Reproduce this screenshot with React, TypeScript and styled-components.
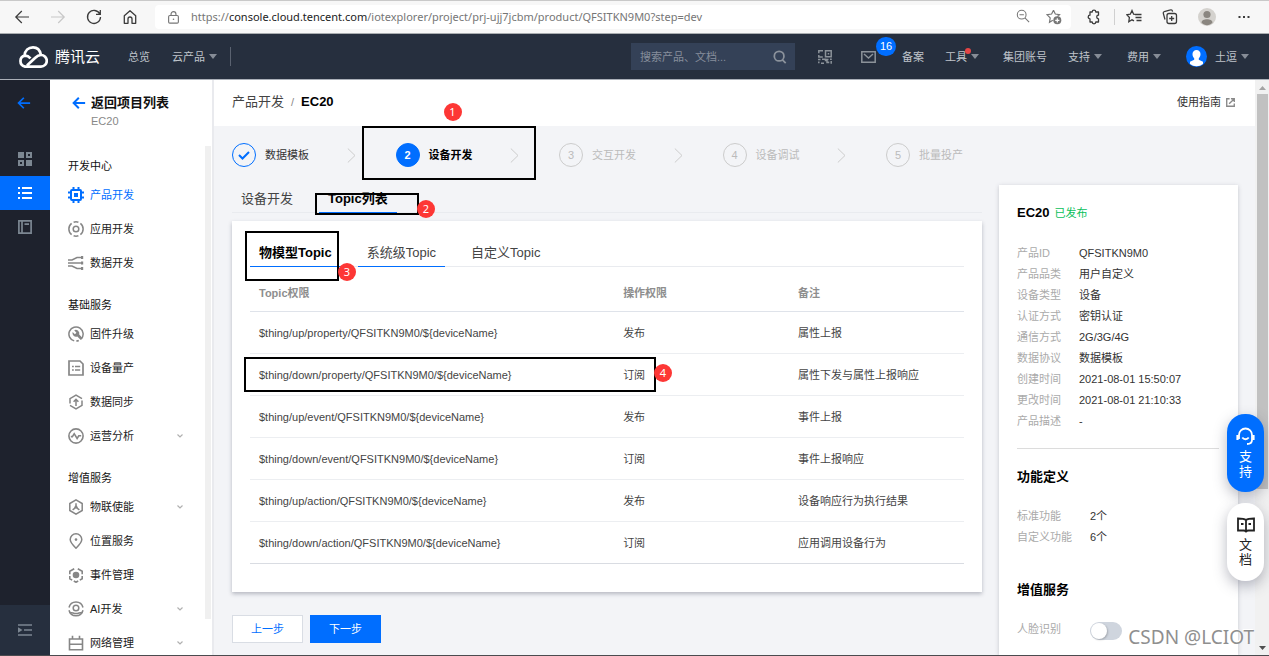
import React from "react";
import styled, { createGlobalStyle, css } from "styled-components";

const GlobalStyle = createGlobalStyle`
  * { box-sizing: border-box; }
  body {
    margin: 0;
    background: #f3f4f7;
    color: #222;
    font-family: "Liberation Sans", "Noto Sans CJK SC", sans-serif;
    font-size: 11px;
    line-height: 16px;
  }
  button, input { font: inherit; color: inherit; }
  button { border: 0; padding: 0; background: none; cursor: pointer; }
  a { color: inherit; text-decoration: none; }
  svg { display: block; flex: none; }
  ul, dl, dd, h1, h2, p { margin: 0; padding: 0; }
  ul { list-style: none; }
`;

/* ---------- icons ---------- */

type IconProps = { size?: number; w?: number; h?: number; box?: string; sw?: number; children: React.ReactNode };
const Icon = ({ size = 16, w, h, box = "0 0 16 16", sw = 1.4, children }: IconProps) => (
  <svg width={w ?? size} height={h ?? size} viewBox={box} fill="none" stroke="currentColor" strokeWidth={sw} aria-hidden="true">
    {children}
  </svg>
);

const ArrowLeft = ({ sw = 1.2, size = 16 }: { sw?: number; size?: number }) => (
  <Icon sw={sw} size={size}><path d="M15 8H1.8M7.8 2 1.8 8l6 6" /></Icon>
);

const icons: Record<string, React.ReactNode> = {
  product: (
    <Icon sw={2}>
      <rect x="3" y="3" width="10" height="10" rx="1" />
      <path d="M5.500 0v3M10.500 0v3M5.500 13v3M10.500 13v3M0 5.500h3M0 10.500h3M13 5.500h3M13 10.500h3" />
      <rect x="6" y="6" width="4" height="4" fill="currentColor" stroke="none" />
    </Icon>
  ),
  app: (
    <Icon sw={1.5}>
      <circle cx="8" cy="8" r="2.8" />
      <path d="M3.6 2.4a7.1 7.1 0 0 0 0 11.2M12.4 2.4a7.1 7.1 0 0 1 0 11.2M5.600 1.300a7 7 0 0 1 4.800 0M5.600 14.700a7 7 0 0 0 4.800 0" />
    </Icon>
  ),
  data: (
    <Icon sw={1.5}>
      <path d="M0 5h4l5-2.5h5M0 8h14M0 11h4l5 2.5h5" />
      <path d="M13 .9h2.2v3H13zM13 6.6h2.2v3H13zM13 12h2.2v3H13z" fill="currentColor" stroke="none" />
    </Icon>
  ),
  firmware: (
    <Icon sw={1.5}>
      <path d="M6.2 14.9a7.1 7.1 0 1 1 7-2M8.3 15.1a7 7 0 0 0 2.5-.6" />
      <path d="M6.2 4.2a3.6 3.6 0 0 1 5 4.3l3.4 3.6-1.8 1.8-3.5-3.5A3.6 3.6 0 0 1 4.6 6l2.3 2.2 1.5-1.5z" fill="currentColor" stroke="none" />
    </Icon>
  ),
  batch: (
    <Icon sw={1.7}>
      <path d="M1 1h11l3 3v11H1z" />
      <path d="M4 6.500h1.800M7 6.500h5.200M4 10h1.800M7 10h5.200" />
    </Icon>
  ),
  sync: (
    <Icon sw={1.5}>
      <path d="M2 9.500V4.6L8 1.2l6 3.4M14 6.500v4.900l-6 3.400-6-3.400" />
      <path d="M8 12V6M5.6 7.8 8 5.4l2.4 2.4" />
    </Icon>
  ),
  analysis: (
    <Icon sw={1.6}>
      <circle cx="8" cy="8" r="7.1" />
      <path d="M2.800 8.600h1.600l1.800-2.900 2.900 4.800 1.700-2.700h2.400" />
    </Icon>
  ),
  enable: (
    <Icon sw={1.5}>
      <path d="M8 .9l6.200 3.600v7L8 15.100l-6.200-3.600v-7z" />
      <path d="M8 4.200v4.200l-3.400 2.400M8 8.400l3.400 2.400M6.400 9.600 8 6.600l1.600 3" />
    </Icon>
  ),
  location: (
    <Icon sw={1.5}>
      <path d="M8 15.2C4 11.4 2.2 9.2 2.2 6.6a5.8 5.8 0 0 1 11.6 0c0 2.6-1.8 4.8-5.8 8.6z" />
      <circle cx="8" cy="6.6" r="1.3" fill="currentColor" stroke="none" />
    </Icon>
  ),
  event: (
    <Icon sw={1.600}>
      <path d="M6.200 1.800 1.800 4.300v2.900M9.800 1.800l4.400 2.500v2.900M1.800 9v2.700l2.400 1.400M14.200 9v2.700l-2.400 1.400M5.800 14 8 15.200l2.200-1.200" />
      <circle cx="8" cy="8" r="3.300" fill="currentColor" stroke="none" />
    </Icon>
  ),
  ai: (
    <Icon sw={1.5}>
      <path d="M1 6.500a7.200 7.200 0 0 1 14 0M1 9.200a7.200 7.200 0 0 0 14 0" />
      <circle cx="8" cy="7" r="2.800" />
      <path d="M1.500 11.400c3.500 0 3.500 1.200 6.500 1.200s3-1.200 6.500-1.200" />
    </Icon>
  ),
  network: (
    <Icon sw={1.600}>
      <path d="M1.500 14.800V4h13v10.800zM1.500 9.200h13M4.500 4V.8M11.500 4V.8" />
    </Icon>
  ),
};

/* ---------- browser bar ---------- */

const Shell = styled.div`
  display: flex;
  flex-direction: column;
  height: 100vh;
  overflow: hidden;
  border-bottom: 1px solid #4b4b4f;
`;
const BrowserBar = styled.div`
  flex: none;
  display: flex;
  align-items: center;
  height: 34px;
  padding: 0 17px 0 14px;
  background: #f7f7f7;
  border-top: 1px solid #c9c9c9;
  border-bottom: 1px solid #a9adb0;
  color: #3b3b3b;
`;
const NavButtons = styled.div`
  display: flex;
  gap: 20px;
  margin-right: 17px;
`;
const IconButton = styled.button<{ $faded?: boolean }>`
  display: flex;
  color: ${(p) => (p.$faded ? "#c8c8c8" : "inherit")};
`;
const AddressBox = styled.div`
  flex: 1;
  display: flex;
  align-items: center;
  height: 24px;
  padding: 0 9px 0 12px;
  border-radius: 4px;
  background: #fff;
  color: #777;
`;
const Address = styled.div`
  flex: 1;
  margin-left: 11px;
  font-family: "Noto Sans", sans-serif;
  color: #767676;
  white-space: nowrap;
  b { font-weight: 400; color: #222; }
`;
const AddressTools = styled.div`
  display: flex;
  gap: 16px;
`;
const BrowserTools = styled.div`
  display: flex;
  align-items: center;
  gap: 20px;
  margin-left: 15px;
`;
const ExtensionTool = styled.div`
  display: flex;
  align-items: center;
  padding-right: 12px;
  margin-right: -9px;
  border-right: 1px solid #d0d0d0;
`;

function Browser() {
  return (
    <BrowserBar>
      <NavButtons>
        <IconButton aria-label="后退"><ArrowLeft /></IconButton>
        <IconButton aria-label="前进" $faded><Icon sw={1.2}><path d="M1 8h13.200M8.200 2l6 6-6 6" /></Icon></IconButton>
        <IconButton aria-label="刷新"><Icon sw={1.3}><path d="M13.800 5A6.500 6.500 0 1 0 14.500 8M14.300 1v4.300H10" /></Icon></IconButton>
        <IconButton aria-label="主页"><Icon sw={1.3}><path d="M2.300 6.800 8 1.700l5.700 5.100v7.500H10V10a2 2 0 0 0-4 0v4.300H2.300z" strokeLinejoin="round" /></Icon></IconButton>
      </NavButtons>
      <AddressBox>
        <Icon size={13} sw={1.4}><rect x="2" y="5.500" width="12" height="9.500" rx="1.500" /><path d="M5 5.500V3.800a3 3 0 0 1 6 0v1.700" /><circle cx="8" cy="10.200" r="1" fill="currentColor" stroke="none" /></Icon>
        <Address>https://<b>console.cloud.tencent.com</b>/iotexplorer/project/prj-ujj7jcbm/product/QFSITKN9M0?step=dev</Address>
        <AddressTools>
          <IconButton aria-label="缩放"><Icon size={14} sw={1.2}><circle cx="6.500" cy="6.500" r="5" /><path d="m10.200 10.200 4.800 4.800M4 6.500h5" /></Icon></IconButton>
          <IconButton aria-label="收藏"><Icon sw={1.2}><path d="M7.500 1.200 9.300 5l4.200.6-2 1.900M6.800 11.300l-3.300 2 .7-4.400L1 5.700 5.600 5l1.900-3.800" /><circle cx="11.300" cy="11.300" r="4" fill="currentColor" stroke="none" /><path d="M11.300 9.200v4.200M9.200 11.300h4.200" stroke="#fff" /></Icon></IconButton>
        </AddressTools>
      </AddressBox>
      <BrowserTools>
        <ExtensionTool>
          <IconButton aria-label="扩展"><Icon sw={1.3}><path d="M4 3h2.200a1.800 1.800 0 0 1 3.600 0H12.500v3.200a1.800 1.800 0 0 0 0 3.600V13H9.800a1.800 1.800 0 0 1-3.600 0H4V9.800a1.800 1.800 0 0 1 0-3.600z" strokeLinejoin="round" /></Icon></IconButton>
        </ExtensionTool>
        <IconButton aria-label="收藏夹"><Icon sw={1.3}><path d="M9.600 5.400 7.600 5.200 6 1.500 4.300 5.200.8 5.700l2.600 2.800-.6 4.200L6 10.800l2 1M9 5.500h6.500M9.500 8.500h6M10.500 11.500h5" /></Icon></IconButton>
        <IconButton aria-label="集锦"><Icon sw={1.3}><rect x="5" y="4.500" width="9.500" height="10" rx="2" /><path d="M9.700 7v5M7.200 9.500h5M3 10.500 1.300 4.300a1.500 1.500 0 0 1 1-1.800L8.500.9a1.500 1.500 0 0 1 1.900 1.100l.2.600" /></Icon></IconButton>
        <IconButton aria-label="个人资料"><Icon size={18} box="0 0 18 18"><circle cx="9" cy="9" r="9" fill="#d4d2ce" stroke="none" /><circle cx="9" cy="6.500" r="3.600" fill="#8a8680" stroke="none" /><path d="M3.500 14.500c0-4.500 11-4.500 11 0-3 3.500-8 3.500-11 0z" fill="#8a8680" stroke="none" /></Icon></IconButton>
        <IconButton aria-label="更多"><Icon><path d="M2.500 8h2M7 8h2M11.500 8h2" strokeWidth="2" /></Icon></IconButton>
      </BrowserTools>
    </BrowserBar>
  );
}

/* ---------- console header ---------- */

const Header = styled.header`
  flex: none;
  display: flex;
  align-items: center;
  height: 46px;
  padding: 0 20px 0 18px;
  background: #262f3e;
  border-bottom: 1px solid #aab0b8;
  color: #bfc4cb;
`;
const Brand = styled.a`
  display: flex;
  align-items: center;
  gap: 7px;
  margin-right: 28px;
  font-size: 15px;
  color: #fff;
`;
const HeaderLink = styled.a<{ $gap: number; $muted?: boolean }>`
  position: relative;
  display: flex;
  align-items: center;
  gap: 4px;
  margin-right: ${(p) => p.$gap}px;
  color: ${(p) => (p.$muted ? "#8b9299" : "inherit")};
  white-space: nowrap;
`;
const Caret = styled.i`
  border: 4px solid transparent;
  border-top: 5px solid #868c96;
  border-bottom: 0;
`;
const HeaderDivider = styled.span`
  height: 19px;
  border-left: 1px solid #5a6270;
`;
const SearchBox = styled.form`
  display: flex;
  align-items: center;
  width: 164px;
  height: 27px;
  margin: 0 23px 0 auto;
  padding: 0 8px 0 9px;
  background: #344157;
  color: #8b929c;
`;
const SearchInput = styled.input`
  flex: 1;
  min-width: 0;
  border: 0;
  padding: 0;
  background: none;
  outline: 0;
  &::placeholder { color: #868e9b; opacity: 1; }
`;
const Count = styled.span`
  position: absolute;
  left: 15px;
  top: -14px;
  min-width: 20px;
  border-radius: 10px;
  background: #006eff;
  color: #fff;
  line-height: 19px;
  text-align: center;
`;
const RedDot = styled.span`
  position: absolute;
  left: 20px;
  top: -1px;
  width: 6px;
  height: 6px;
  border-radius: 3px;
  background: #e54545;
`;
const Avatar = styled.span`
  display: flex;
  margin-right: 4px;
`;

function ConsoleHeader() {
  return (
    <Header>
      <Brand href="#">
        <Icon w={30} h={22} box="0 0 30 22" sw={2.7}>
          <path d="M7 9.600a5.600 5.600 0 0 0 0 11H23a5.800 5.800 0 0 0 0-11.600c-3 0-4.500 1.500-6 3L9 19.600M6.500 9.700C7 4.400 10.500 1.400 15 1.400c4.300 0 7 3 7.800 7.200M7 9.600c2.500 0 4 1 5.500 2.700" />
        </Icon>
        腾讯云
      </Brand>
      <HeaderLink href="#" $gap={22}>总览</HeaderLink>
      <HeaderLink href="#" $gap={13}>云产品<Caret /></HeaderLink>
      <HeaderDivider />
      <SearchBox>
        <SearchInput aria-label="搜索" placeholder="搜索产品、文档..." />
        <IconButton type="button" aria-label="搜索"><Icon size={14} sw={2}><circle cx="7" cy="7" r="5.500" /><path d="m10.500 11 4 4" /></Icon></IconButton>
      </SearchBox>
      <HeaderLink href="#" $gap={29} $muted aria-label="小程序">
        <Icon size={14} box="0 0 14 14" sw={1.5}>
          <path d="M5 .8H.8v2.400M.8 5v2h4M7.500.8h5.700v6H7.500zM9.700 3.800h1.500M0 9.500h2.500M4 9.200h3.500v2M.8 13.200V11.500M3 13.200h3M9 13.200V9.500h1.500M12 9.200h1.800M13.200 11v2.800M10.500 11.500v1.700" />
        </Icon>
      </HeaderLink>
      <HeaderLink href="#" $gap={26} $muted aria-label="消息">
        <Icon w={15} h={12} box="0 0 15 12" sw={1.5}><path d="M.8.8h13.400v10.400H.8zM3 3l4.500 4L12 3" /></Icon>
        <Count>16</Count>
      </HeaderLink>
      <HeaderLink href="#" $gap={21}>备案</HeaderLink>
      <HeaderLink href="#" $gap={24}>工具<Caret /><RedDot /></HeaderLink>
      <HeaderLink href="#" $gap={21}>集团账号</HeaderLink>
      <HeaderLink href="#" $gap={25}>支持<Caret /></HeaderLink>
      <HeaderLink href="#" $gap={25}>费用<Caret /></HeaderLink>
      <HeaderLink href="#" $gap={0}>
        <Avatar>
          <Icon w={21} h={21} box="0 0 21 21"><circle cx="10.500" cy="10.500" r="10.500" fill="#006eff" stroke="none" /><path d="M10.500 4a4 4 0 0 1 4 4.200c0 1.800-.8 3-1.700 4v1.500l4.200 2V18a10.500 10.500 0 0 1-13 0v-2.300l4.200-2v-1.500c-.9-1-1.700-2.200-1.700-4a4 4 0 0 1 4-4.200z" fill="#fff" stroke="none" /></Icon>
        </Avatar>
        土逗<Caret />
      </HeaderLink>
    </Header>
  );
}

/* ---------- left rail and side menu ---------- */

const Body = styled.div`
  flex: 1;
  min-height: 0;
  display: flex;
`;
const Rail = styled.nav`
  flex: none;
  display: flex;
  flex-direction: column;
  width: 50px;
  background: #1e222d;
  color: #7c8792;
`;
const RailButton = styled.button<{ $active?: boolean; $back?: boolean; $foot?: boolean }>`
  display: flex;
  align-items: center;
  justify-content: center;
  flex: none;
  height: 34px;
  ${(p) => p.$active && css`background: #006eff; color: #fff;`}
  ${(p) => p.$back && css`height: 46px; margin-bottom: 16px; color: #006eff; padding-right: 3px;`}
  ${(p) => p.$foot && css`height: 50px; margin-top: auto; background: #262f3e;`}
`;
const SideNav = styled.nav`
  flex: none;
  display: flex;
  flex-direction: column;
  width: 164px;
  background: #fff;
  border-right: 2px solid #e9eaee;
`;
const BackLink = styled.a`
  flex: none;
  display: grid;
  grid-template-columns: 19px 1fr;
  align-items: center;
  height: 65px;
  padding: 14px 0 15px 22px;
  svg { color: #006eff; }
  strong { font-size: 13px; line-height: 18px; color: #111; }
  span { grid-column: 2; line-height: 18px; color: #888; }
`;
const MenuScroller = styled.div`
  flex: 1;
  min-height: 0;
  display: flex;
`;
const Menu = styled.div`
  flex: 1;
  height: 100%;
  overflow: hidden;
  padding: 9px 0 0 18px;
`;
const MenuTrack = styled.div`
  flex: none;
  width: 6px;
  margin: 1px 1px 36px 0;
  background: #f0f0f0;
`;
const MenuTitle = styled.h2`
  font-size: 11px;
  font-weight: 400;
  line-height: 24px;
  color: #111;
`;
const MenuList = styled.ul`
  margin-bottom: 13px;
`;
const MenuItem = styled.a<{ $active?: boolean }>`
  display: flex;
  align-items: center;
  gap: 6px;
  height: 34px;
  padding-right: 22px;
  color: ${(p) => (p.$active ? "#006eff" : "#222")};
  > svg:first-child { color: ${(p) => (p.$active ? "#006eff" : "#868686")}; }
  > svg:last-child { margin-left: auto; color: #b0b0b0; }
`;

const menu: { title: string; items: [string, string, boolean?][] }[] = [
  { title: "开发中心", items: [["product", "产品开发"], ["app", "应用开发"], ["data", "数据开发"]] },
  { title: "基础服务", items: [["firmware", "固件升级"], ["batch", "设备量产"], ["sync", "数据同步"], ["analysis", "运营分析", true]] },
  { title: "增值服务", items: [["enable", "物联使能", true], ["location", "位置服务"], ["event", "事件管理"], ["ai", "AI开发", true], ["network", "网络管理", true]] },
];

function Sidebar() {
  return (
    <>
      <Rail>
        <RailButton $back aria-label="返回"><ArrowLeft sw={2} size={14} /></RailButton>
        <RailButton aria-label="概览">
          <Icon size={14} box="0 0 14 14" sw={2}><path d="M0 0h6v6H0zM8 8h6v6H8z" fill="currentColor" stroke="none" /><path d="M9 1h4v4H9zM1 9h4v4H1z" /></Icon>
        </RailButton>
        <RailButton $active aria-label="列表">
          <Icon size={14} box="0 0 14 14" sw={2}><path d="M0 2h2M4 2h10M0 7h2M4 7h10M0 12h2M4 12h10" /></Icon>
        </RailButton>
        <RailButton aria-label="文档">
          <Icon size={14} box="0 0 14 14" sw={1.7}><path d="M.9.900h12.200v12.200H.9zM4 1v12M6.500 4.200h4.500" /></Icon>
        </RailButton>
        <RailButton $foot aria-label="展开">
          <Icon w={14} h={12} box="0 0 14 12" sw={1.7}><path d="M0 1h14M6 6h8M0 11h14" /><path d="M0 3.200 4.500 6 0 8.800z" fill="currentColor" stroke="none" /></Icon>
        </RailButton>
      </Rail>
      <SideNav>
        <BackLink href="#">
          <ArrowLeft sw={2.2} size={14} />
          <strong>返回项目列表</strong>
          <span>EC20</span>
        </BackLink>
        <MenuScroller>
          <Menu>
            {menu.map((group) => (
              <React.Fragment key={group.title}>
                <MenuTitle>{group.title}</MenuTitle>
                <MenuList>
                  {group.items.map(([icon, label, more]) => (
                    <li key={label}>
                      <MenuItem href="#" $active={icon === "product"}>
                        {icons[icon]}
                        <span>{label}</span>
                        {more && <Icon w={6} h={4} box="0 0 6 4" sw={1.2}><path d="m.5.500 2.500 2.500L5.500.500" /></Icon>}
                      </MenuItem>
                    </li>
                  ))}
                </MenuList>
              </React.Fragment>
            ))}
          </Menu>
          <MenuTrack />
        </MenuScroller>
      </SideNav>
    </>
  );
}

/* ---------- annotations drawn over the page ---------- */

const Frame = styled.span<{ $x: number; $y: number; $w: number; $h: number }>`
  position: absolute;
  z-index: 2;
  left: ${(p) => p.$x}px;
  top: ${(p) => p.$y}px;
  width: ${(p) => p.$w}px;
  height: ${(p) => p.$h}px;
  border: 2px solid #000;
  pointer-events: none;
`;
const Marker = styled.span<{ $x: number; $y: number }>`
  position: absolute;
  z-index: 3;
  left: ${(p) => p.$x}px;
  top: ${(p) => p.$y}px;
  width: 18px;
  height: 18px;
  border-radius: 9px;
  background: #fd3735;
  color: #fff;
  font-family: "Noto Sans", sans-serif;
  font-size: 11px;
  font-weight: 400;
  line-height: 17px;
  text-align: center;
`;

/* ---------- main area ---------- */

const Main = styled.main`
  position: relative;
  flex: 1;
  min-width: 0;
  display: flex;
  overflow: hidden;
`;
const Page = styled.div`
  flex: 1;
  min-width: 0;
  display: flex;
  flex-direction: column;
`;
const TitleBar = styled.div`
  flex: none;
  display: flex;
  align-items: center;
  justify-content: space-between;
  height: 46px;
  padding: 0 20px 2px 18px;
  background: #fff;
`;
const Crumbs = styled.div`
  display: flex;
  gap: 7px;
  font-size: 13px;
  color: #444;
  h1 { font-size: 13px; color: #000; line-height: 16px; }
  span { font-size: 11px; color: #888; }
`;
const GuideLink = styled.a`
  display: flex;
  align-items: center;
  gap: 5px;
  color: #333;
  svg { color: #888; }
`;
const Columns = styled.div`
  flex: 1;
  min-height: 0;
  display: grid;
  grid-template-columns: minmax(0, 1fr) 239px;
  gap: 17px;
  padding: 0 17px 0 18px;
`;
const StepList = styled.ol`
  display: flex;
  height: 58px;
  margin: 0;
  padding: 17px 0 0;
  list-style: none;
`;
const StepItem = styled.li<{ $state: "done" | "current" | "todo" }>`
  position: relative;
  flex: 1;
  display: flex;
  align-items: center;
  gap: 9px;
  height: 24px;
  padding-right: 40px;
  white-space: nowrap;
  color: ${(p) => (p.$state === "todo" ? "#bbb" : p.$state === "done" ? "#333" : "#000")};
  font-weight: ${(p) => (p.$state === "current" ? 700 : 400)};
  > svg { margin-left: auto; color: #ccc; }
  &:last-child { flex: none; padding-right: 19px; }
`;
const StepMark = styled.span<{ $state: "done" | "current" | "todo" }>`
  flex: none;
  display: flex;
  align-items: center;
  justify-content: center;
  width: 24px;
  height: 24px;
  border-radius: 12px;
  border: 1px solid ${(p) => (p.$state === "todo" ? "#ccc" : "#006eff")};
  background: ${(p) => (p.$state === "current" ? "#006eff" : "transparent")};
  color: ${(p) => (p.$state === "current" ? "#fff" : p.$state === "done" ? "#006eff" : "#bbb")};
`;
const TabList = styled.div<{ $offset: number }>`
  display: flex;
  gap: 17px;
  padding-top: ${(p) => p.$offset}px;
  border-bottom: 1px solid #e9ebef;
`;
const Tab = styled.button<{ $selected?: boolean; $underlined?: boolean }>`
  position: relative;
  margin-bottom: -1px;
  padding: 0 9px;
  border-bottom: 1px solid ${(p) => (p.$underlined ? "#006eff" : "transparent")};
  font-size: 13px;
  line-height: 26px;
  color: ${(p) => (p.$selected ? "#000" : "#444")};
  font-weight: ${(p) => (p.$selected ? 700 : 400)};
  white-space: nowrap;
`;
const Card = styled.section`
  margin-top: 8px;
  padding: 0 18px 28px;
  background: #fff;
  box-shadow: 0 2px 4px rgba(54, 58, 80, 0.32);
`;
const TableWrap = styled.div`
  position: relative;
`;
const Table = styled.table`
  width: 100%;
  table-layout: fixed;
  border-collapse: separate;
  border-spacing: 0;
  color: #444;
  th, td {
    height: 42px;
    padding: 0 9px;
    border-bottom: 1px solid #eceef1;
    text-align: left;
    vertical-align: middle;
  }
  th { height: 45px; padding-top: 8px; border-color: #dfe3ea; color: #8e8e8e; }
  th:first-child { width: 51%; }
  th:nth-child(3) { width: 24.5%; }
  tbody tr:last-child td { border-color: #d9dce2; }
`;
const Actions = styled.div`
  display: flex;
  gap: 7px;
  margin-top: 23px;
`;
const ActionButton = styled.button<{ $primary?: boolean }>`
  width: 71px;
  height: 28px;
  border: 1px solid ${(p) => (p.$primary ? "#006eff" : "#d9dde4")};
  background: ${(p) => (p.$primary ? "#006eff" : "#fff")};
  color: ${(p) => (p.$primary ? "#fff" : "#006eff")};
`;

const rows = [
  ["$thing/up/property/QFSITKN9M0/${deviceName}", "发布", "属性上报"],
  ["$thing/down/property/QFSITKN9M0/${deviceName}", "订阅", "属性下发与属性上报响应"],
  ["$thing/up/event/QFSITKN9M0/${deviceName}", "发布", "事件上报"],
  ["$thing/down/event/QFSITKN9M0/${deviceName}", "订阅", "事件上报响应"],
  ["$thing/up/action/QFSITKN9M0/${deviceName}", "发布", "设备响应行为执行结果"],
  ["$thing/down/action/QFSITKN9M0/${deviceName}", "订阅", "应用调用设备行为"],
];
const steps = ["数据模板", "设备开发", "交互开发", "设备调试", "批量投产"];

function Steps() {
  return (
    <StepList>
      {steps.map((label, i) => {
        const state = i === 0 ? "done" : i === 1 ? "current" : "todo";
        return (
          <StepItem key={label} $state={state}>
            <StepMark $state={state}>
              {i === 0 ? <Icon w={12} h={9} box="0 0 12 9" sw={2}><path d="M1 4l3.500 3.500L11 1" /></Icon> : i + 1}
            </StepMark>
            {label}
            {i < 4 && <Icon w={9} h={15} box="0 0 9 15" sw={1}><path d="m.8.500 7.200 7-7.200 7" /></Icon>}
            {i === 1 && (
              <>
                <Frame $x={-34} $y={-17} $w={174} $h={54} />
                <Marker $x={48} $y={-40}>1</Marker>
              </>
            )}
          </StepItem>
        );
      })}
    </StepList>
  );
}

/* ---------- product details ---------- */

const Details = styled.aside`
  margin-top: 59px;
  padding: 18px 19px 0 18px;
  background: #fff;
  box-shadow: 0 1px 4px rgba(54, 58, 80, 0.25);
`;
const ProductTitle = styled.h2`
  display: flex;
  align-items: center;
  gap: 5px;
  margin-bottom: 20px;
  font-size: 13px;
  line-height: 20px;
  color: #000;
  span { font-size: 11px; font-weight: 400; color: #0abf5b; }
`;
const FieldList = styled.dl<{ $label: number }>`
  display: grid;
  grid-template-columns: ${(p) => p.$label}px 1fr;
  line-height: 21px;
  dt { color: #aaa; }
  dd { color: #333; }
`;
const Rule = styled.hr`
  height: 1px;
  margin: 16px 0 0;
  border: 0;
  background: #dcdcdc;
`;
const SectionTitle = styled.h2<{ $space: number }>`
  margin: ${(p) => p.$space}px 0 19px;
  font-size: 13px;
  line-height: 20px;
  color: #000;
`;
const ToggleRow = styled.label`
  display: grid;
  grid-template-columns: 73px 1fr;
  align-items: center;
  line-height: 21px;
  color: #aaa;
`;
const Toggle = styled.input`
  appearance: none;
  width: 32px;
  height: 18px;
  margin: 2px 0 0;
  border-radius: 9px;
  background: #cfd5de;
  &::before {
    content: "";
    display: block;
    width: 16px;
    height: 16px;
    margin: 1px;
    border-radius: 8px;
    background: #fff;
    box-shadow: 1px 1px 2px rgba(0, 0, 0, 0.2);
  }
`;

const fields = [
  ["产品ID", "QFSITKN9M0"],
  ["产品品类", "用户自定义"],
  ["设备类型", "设备"],
  ["认证方式", "密钥认证"],
  ["通信方式", "2G/3G/4G"],
  ["数据协议", "数据模板"],
  ["创建时间", "2021-08-01 15:50:07"],
  ["更改时间", "2021-08-01 21:10:33"],
  ["产品描述", "-"],
];

function Fields({ label, items }: { label: number; items: string[][] }) {
  return (
    <FieldList $label={label}>
      {items.map(([k, v]) => (
        <React.Fragment key={k}>
          <dt>{k}</dt>
          <dd>{v}</dd>
        </React.Fragment>
      ))}
    </FieldList>
  );
}

/* ---------- scroll bar and floating parts ---------- */

const ScrollTrack = styled.div`
  flex: none;
  display: flex;
  flex-direction: column;
  align-items: center;
  justify-content: space-between;
  width: 14px;
  padding: 6px 0 5px;
  background: #f1f1f1;
  color: #a3a3a3;
`;
const ScrollThumb = styled.div`
  width: 11px;
  height: 70%;
  margin: 4px 0 auto;
  background: #c1c1c1;
`;
const Floating = styled.div`
  position: absolute;
  z-index: 4;
  right: 5px;
  bottom: 74px;
  display: flex;
  flex-direction: column;
  gap: 11px;
`;
const FloatButton = styled.button<{ $primary?: boolean }>`
  display: flex;
  flex-direction: column;
  align-items: center;
  width: 37px;
  height: 78px;
  padding: 13px 11px 0;
  border-radius: 18px;
  background: ${(p) => (p.$primary ? "#006eff" : "#fff")};
  color: ${(p) => (p.$primary ? "#fff" : "#222")};
  font-size: 13px;
  line-height: 15px;
  box-shadow: 0 5px 14px rgba(54, 58, 80, 0.35);
  svg { margin-bottom: 3px; }
`;
const Watermark = styled.p`
  position: absolute;
  z-index: 5;
  right: 15px;
  bottom: 5px;
  font-family: "Noto Sans", sans-serif;
  font-size: 19px;
  line-height: 26px;
  color: #8f8f8f;
  text-shadow: -1px -1px 0 #fff;
`;

export default function App() {
  return (
    <>
      <GlobalStyle />
      <Shell>
        <Browser />
        <ConsoleHeader />
        <Body>
          <Sidebar />
          <Main>
            <Page>
              <TitleBar>
                <Crumbs>
                  <a href="#">产品开发</a>
                  <span>/</span>
                  <h1>EC20</h1>
                </Crumbs>
                <GuideLink href="#">
                  使用指南
                  <Icon size={9} box="0 0 10 10" sw={1.5}><path d="M4 .8H.8v8.400h8.400V6M5.500.8h3.700v3.700M9 1 3.500 6.500" /></Icon>
                </GuideLink>
              </TitleBar>
              <Columns>
                <div>
                  <Steps />
                  <TabList $offset={2} role="tablist">
                    <Tab role="tab">设备开发</Tab>
                    <Tab role="tab" aria-selected $selected $underlined>
                      Topic列表
                      <Frame $x={-4} $y={7} $w={104} $h={22} />
                      <Marker $x={98} $y={14}>2</Marker>
                    </Tab>
                  </TabList>
                  <Card>
                    <TabList $offset={19} role="tablist">
                      <Tab role="tab" aria-selected $selected $underlined>
                        物模型Topic
                        <Frame $x={-5} $y={-9} $w={94} $h={50} />
                        <Marker $x={88} $y={23}>3</Marker>
                      </Tab>
                      <Tab role="tab" $underlined>系统级Topic</Tab>
                      <Tab role="tab">自定义Topic</Tab>
                    </TabList>
                    <TableWrap>
                      <Table>
                        <thead>
                          <tr>
                            <th>Topic权限</th>
                            <th>操作权限</th>
                            <th>备注</th>
                          </tr>
                        </thead>
                        <tbody>
                          {rows.map((row) => (
                            <tr key={row[0]}>
                              {row.map((cell) => <td key={cell}>{cell}</td>)}
                            </tr>
                          ))}
                        </tbody>
                      </Table>
                      <Frame $x={-6} $y={90} $w={412} $h={35} />
                      <Marker $x={404} $y={97}>4</Marker>
                    </TableWrap>
                  </Card>
                  <Actions>
                    <ActionButton>上一步</ActionButton>
                    <ActionButton $primary>下一步</ActionButton>
                  </Actions>
                </div>
                <Details>
                  <ProductTitle>EC20 <span>已发布</span></ProductTitle>
                  <Fields label={62} items={fields} />
                  <Rule />
                  <SectionTitle $space={18}>功能定义</SectionTitle>
                  <Fields label={73} items={[["标准功能", "2个"], ["自定义功能", "6个"]]} />
                  <SectionTitle $space={32}>增值服务</SectionTitle>
                  <ToggleRow>
                    人脸识别
                    <Toggle type="checkbox" />
                  </ToggleRow>
                </Details>
              </Columns>
            </Page>
            <ScrollTrack>
              <Icon w={7} h={4} box="0 0 7 4"><path d="M0 4 3.500 0 7 4z" fill="currentColor" stroke="none" /></Icon>
              <ScrollThumb />
              <Icon w={7} h={4} box="0 0 7 4"><path d="M0 0 3.500 4 7 0z" fill="#505050" stroke="none" /></Icon>
            </ScrollTrack>
            <Floating>
              <FloatButton $primary>
                <Icon size={19} box="0 0 19 19" sw={1.8}><path d="M3 12V8a6.500 6.500 0 0 1 13 0v5c0 2.500-1.500 4-5 4M6.300 10.500c1.500 2.300 4.900 2.300 6.400 0" /><path d="M1.500 8v5M17.500 8v5" strokeWidth="2.200" /></Icon>
                支持
              </FloatButton>
              <FloatButton>
                <Icon size={18} box="0 0 18 18" sw={1.8}><path d="M9 4C7.500 2.800 6 2.500 1 2.500v12h5.500c1 0 2 .3 2.500 1 .5-.7 1.500-1 2.500-1H17v-12c-5 0-6.500.3-8 1.500zM9 4v11M4 8h2.500M11.500 8H14" /></Icon>
                文档
              </FloatButton>
            </Floating>
            <Watermark>CSDN @LCIOT</Watermark>
          </Main>
        </Body>
      </Shell>
    </>
  );
}
